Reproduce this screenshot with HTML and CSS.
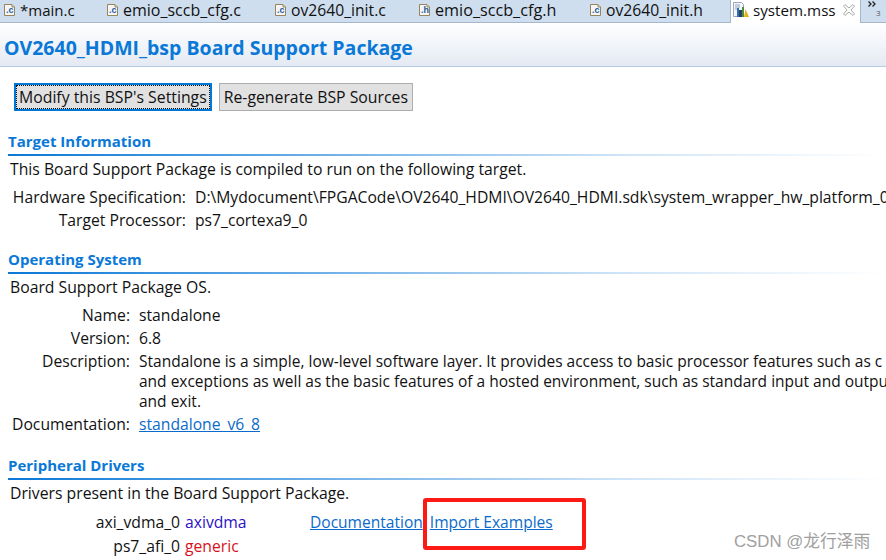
FILE: index.html
```html
<!DOCTYPE html>
<html lang="en">
<head>
<meta charset="utf-8">
<title>system.mss</title>
<link rel="stylesheet" href="styles.css">
</head>
<body>
<svg class="defs" width="0" height="0" aria-hidden="true">
  <symbol id="file" viewBox="0 0 11 12">
    <path d="M.5 .5H8L10.500 3V11.500H.5Z" fill="#f4f6fa" stroke="#97855a"/>
    <path d="M8 .5V3H10.500" fill="#e6e2cf" stroke="#97855a"/>
  </symbol>
</svg>
<nav class="tabs">
  <div class="tab t1"><span class="ficon"><svg width="11" height="12"><use href="#file"/></svg><b>.c</b></span>*main.c</div>
  <div class="tab t2"><span class="ficon"><svg width="11" height="12"><use href="#file"/></svg><b>.c</b></span>emio_sccb_cfg.c</div>
  <div class="tab t3"><span class="ficon"><svg width="11" height="12"><use href="#file"/></svg><b>.c</b></span>ov2640_init.c</div>
  <div class="tab t4"><span class="ficon"><svg width="11" height="12"><use href="#file"/></svg><b>.h</b></span>emio_sccb_cfg.h</div>
  <div class="tab t5"><span class="ficon"><svg width="11" height="12"><use href="#file"/></svg><b>.c</b></span>ov2640_init.h</div>
  <div class="tab active">
    <svg class="mss" width="16" height="16" viewBox="0 0 16 16">
      <path d="M.5 .5H8.500L10.500 2.500V14.500H.5Z" fill="#f3f6fb" stroke="#9aa7b8"/>
      <path d="M2 3H7M2 5H7M2 7H4" stroke="#8fa3bd"/>
      <rect x="4" y="6" width="2" height="9" fill="#2d6fb0"/>
      <rect x="6" y="8" width="3" height="7" fill="#2b3f66"/>
      <rect x="9" y="5" width="2" height="10" fill="#4b8f3a"/>
      <path d="M11 15L12.500 7L16 15Z" fill="#e0b020"/>
    </svg>
    <span>system.mss</span>
    <svg class="close" width="12" height="12" viewBox="0 0 12 12">
      <path d="M.5 2L2 .5L6 4L10 .5L11.500 2L8 6L11.500 10L10 11.500L6 8L2 11.500L.5 10L4 6Z" fill="#fff" stroke="#a9a9a9"/>
    </svg>
  </div>
  <div class="more">
    <svg class="chev" width="9" height="6" viewBox="0 0 9 6">
      <path d="M.5 .5L3 3L.5 5.500M4.500 .5L7 3L4.500 5.500" fill="none" stroke="#222" stroke-width="1.300"/>
    </svg>
    <span class="num">3</span>
  </div>
</nav>

<header class="title">OV2640_HDMI_bsp Board Support Package</header>

<main class="content">
  <div class="buttons">
    <button class="btn focused"><span>Modify this BSP's Settings</span></button>
    <button class="btn"><span>Re-generate BSP Sources</span></button>
  </div>

  <section class="sec sec-target">
    <h2>Target Information</h2>
    <p class="lead">This Board Support Package is compiled to run on the following target.</p>
    <div class="kv kv-target">
      <div class="k">Hardware Specification:</div><div class="v">D:\Mydocument\FPGACode\OV2640_HDMI\OV2640_HDMI.sdk\system_wrapper_hw_platform_0</div>
      <div class="k">Target Processor:</div><div class="v">ps7_cortexa9_0</div>
    </div>
  </section>

  <section class="sec sec-os">
    <h2>Operating System</h2>
    <p class="lead">Board Support Package OS.</p>
    <div class="kv kv-os">
      <div class="k">Name:</div><div class="v">standalone</div>
      <div class="k">Version:</div><div class="v">6.8</div>
      <div class="k">Description:</div>
      <div class="v desc"><span>Standalone is a simple, low-level software layer. It provides access to basic processor features such as c</span><span>and exceptions as well as the basic features of a hosted environment, such as standard input and output</span><span>and exit.</span></div>
      <div class="k">Documentation:</div><div class="v"><a href="#">standalone_v6_8</a></div>
    </div>
  </section>

  <section class="sec sec-drv">
    <h2>Peripheral Drivers</h2>
    <p class="lead">Drivers present in the Board Support Package.</p>
    <div class="drivers">
      <div class="d">axi_vdma_0</div><div class="dn blue">axivdma</div><div class="links"><a href="#">Documentation</a><a href="#">Import Examples</a></div>
      <div class="d">ps7_afi_0</div><div class="dn red">generic</div><div></div>
    </div>
  </section>
</main>

<div class="callout"></div>
<div class="mark">CSDN @龙行泽雨</div>
</body>
</html>
```
FILE: styles.css
```css
html, body { margin: 0; padding: 0; }
body {
  width: 886px;
  height: 560px;
  overflow: hidden;
  position: relative;
  background: #fff;
  color: #111;
  font-family: "Open Sans", "Noto Sans", sans-serif;
  font-size: 15.7px;
}
.defs { position: absolute; }
.tabs {
  display: flex;
  height: 22px;
  padding-left: 1px;
  background: #cfdeee;
  border-bottom: 1px solid #a6b6cb;
  line-height: 20px;
  white-space: nowrap;
}
.tab {
  display: flex;
  align-items: center;
  gap: 5px;
  padding: 0 0 3px 3px;
  box-sizing: border-box;
  height: 22px;
}
.t1 { width: 103px; font-size: 15px; }
.t2 { width: 168px; font-size: 16px; }
.t3 { width: 144px; }
.t4 { width: 171px; font-size: 16.2px; }
.t5 { width: 143px; }
.ficon { position: relative; width: 11px; height: 12px; display: block; flex: none; margin-top: 1px; }
.ficon svg { display: block; }
.ficon b {
  position: absolute;
  left: 2px;
  top: 1px;
  font: bold 9px/11px "Liberation Sans", sans-serif;
  color: #2b5a94;
}
.active {
  background: #fff;
  width: 131px;
  height: 23px;
  padding: 0 0 4px 2px;
  border-left: 1px solid #a6b6cb;
  border-right: 1px solid #a6b6cb;
  gap: 4px;
  font-size: 15.2px;
}
.close { margin-left: 3px; flex: none; }
.mss { flex: none; }
.more { flex: 1; padding: 1px 0 0 7px; line-height: 1; }
.chev { display: block; }
.num { display: block; margin: 2px 0 0 8px; font-size: 8px; color: #555; }
.title {
  height: 44px;
  box-sizing: border-box;
  padding: 12px 0 0 4px;
  background: linear-gradient(#fff, #e4eaf3);
  border-bottom: 1px solid #b9cbe4;
  color: #0a78d7;
  font-size: 19.5px;
  line-height: 26px;
  font-weight: 700;
  white-space: nowrap;
}
.content { padding: 16px 0 0 8px; white-space: nowrap; }
.buttons { display: flex; gap: 7px; margin-left: 6px; }
.btn {
  height: 28px;
  padding: 0 4px;
  background: #e1e1e1;
  border: 1px solid #adadad;
  color: #111;
  font: inherit;
  font-size: 15.8px;
  line-height: 20px;
}
.btn.focused { border: 2px solid #0078d7; padding: 0 1px; }
.btn.focused span { display: block; padding: 0 2px; outline: 1px dotted #111; line-height: 22px; }
.sec h2 {
  margin: 0;
  font-size: 15px;
  line-height: 20px;
  font-weight: 700;
  color: #0a78d7;
  padding-bottom: 2px;
}
.sec h2::after {
  content: "";
  display: block;
  height: 2px;
  margin-top: 3px;
  background: linear-gradient(90deg, #0a78d7, #cfe4f7 70%, #fff);
}
.sec-target { margin-top: 20px; }
.sec-os { margin-top: 17px; }
.sec-drv { margin-top: 19px; }
.lead { margin: 0 0 0 2px; line-height: 22px; font-size: 15.75px; }
.kv { display: grid; column-gap: 9px; line-height: 23px; }
.k { text-align: right; }
.kv-target { grid-template-columns: 178px auto; margin-top: 6px; }
.kv-os { grid-template-columns: 122px auto; margin-top: 6px; }
.desc span { display: block; line-height: 20px; font-size: 15.5px; }
.desc { padding: 1px 0 2px; }
a { color: #0a6bcb; }
.drivers {
  display: grid;
  grid-template-columns: 172px 66px auto;
  column-gap: 5px;
  line-height: 24px;
  margin-top: 6px;
}
.d { text-align: right; }
.blue { color: #2a10c8; }
.red { color: #d8101c; }
.links { display: flex; gap: 7px; padding: 1px 0 0 54px; font-size: 15.55px; line-height: 23px; }
.callout {
  position: absolute;
  left: 423px;
  top: 498px;
  width: 163px;
  height: 52px;
  box-sizing: border-box;
  border: 4px solid #fb1a14;
  border-radius: 3px;
}
.mark {
  position: absolute;
  left: 734px;
  top: 530px;
  font: 16.8px/24px "Liberation Sans", "Noto Sans CJK SC", sans-serif;
  color: #a0a0a0;
}
```
